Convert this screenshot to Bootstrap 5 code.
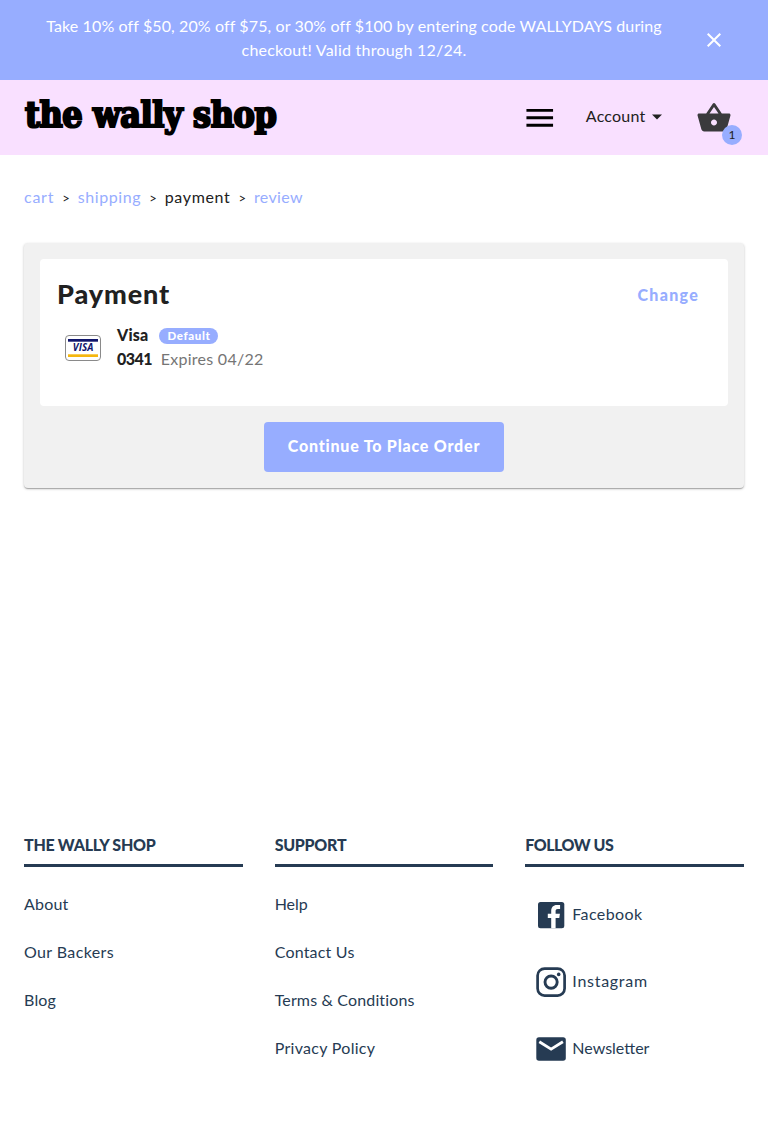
<!DOCTYPE html>
<html lang="en">
<head>
<meta charset="utf-8">
<meta name="viewport" content="width=device-width, initial-scale=1">
<title>the wally shop</title>
<link href="https://cdn.jsdelivr.net/npm/bootstrap@5.3.0/dist/css/bootstrap.min.css" rel="stylesheet">
<style>
body{font-family:Lato,"Liberation Sans",sans-serif;font-size:16px;line-height:24px;letter-spacing:.2px;color:#212121;background:#fff}
a{text-decoration:none;color:inherit}
svg{display:block;flex:none}
.heavy{font-weight:900}
.promo{background:#97adff;height:80px;padding:14px 42px 0 24px;color:#fff}
.promo-text{width:660px;letter-spacing:.115px}
.promo-text span{letter-spacing:.24px}
.promo-close{margin:14px 0 0 auto}
.topbar{background:#f9e0ff;height:75px;padding:0 24px}
.brand-name{font:bold 35.5px/48px "DejaVu Serif Condensed","DejaVu Serif",serif;font-stretch:condensed;-webkit-text-stroke:2.2px #000;color:#000;letter-spacing:-.35px;word-spacing:0;margin-top:-5px;padding-left:1px}
.menu-btn{margin-left:auto}
.account-link{margin:-3px 0 0 28px;letter-spacing:.22px}
.account-link svg{margin-left:-.5px}
.basket{margin-left:27px;margin-right:12px}
.basket-count{position:absolute;right:-10px;bottom:-9.5px;width:20px;height:20px;border-radius:50%;background:#97adff;font-size:12px;line-height:19px;text-align:center;letter-spacing:0}
.crumbs{padding:30px 24px 0;height:88px}
.crumbs a{color:#97adff}
.crumbs .sep{font-size:13px;letter-spacing:0;width:23.600px;text-align:center;padding-top:1px}
.panel{margin:0 24px;height:245px;padding:16px;background:#f1f1f1;border-radius:4px;box-shadow:0 1px 3px rgba(0,0,0,.2),0 1px 1px rgba(0,0,0,.14),0 2px 1px -1px rgba(0,0,0,.12)}
.pay-box{background:#fff;border-radius:4px;height:147px;padding:18px 29px 0 17px}
.pay-title{font-size:27px;line-height:34px;font-weight:900;letter-spacing:.9px;margin:0}
.change{color:#97adff;letter-spacing:1.28px;margin-top:6px}
.visa-card{margin:2px 16px 0 8px}
.method{margin-top:12px}
.pill-default{background:#97adff;color:#fff;border-radius:8px;height:16px;line-height:15px;font-size:11.5px;letter-spacing:.65px;padding:0 7px 0 8px;margin:5px 0 0 11px}
.expires{color:#757575;margin-left:8.5px;letter-spacing:.28px}
.place-order{width:240px;height:50px;margin-top:16px;padding:0 0 2px;border:0;border-radius:4px;background:#97adff;color:#fff;font-weight:900;letter-spacing:.79px}
footer{margin-top:344px;padding:0 24px;color:#263b53}
.foot-row{--bs-gutter-x:32px}
.foot-head{font-size:16px;line-height:24px;font-weight:900;letter-spacing:-.28px;margin:0;padding:1px 0 7px;border-bottom:3px solid #263b53}
.foot-links{padding-top:25px;gap:24px}
.social{padding:30px 0 0 8px;gap:31px}
.social a{height:36px}
.social span{padding-bottom:3px;margin-left:3px}
</style>
</head>
<body>
<div class="promo d-flex align-items-start">
  <div class="promo-text text-center">Take 10% off $50, 20% off $75, or 30% off $100 by entering code WALLYDAYS during<br><span>checkout! Valid through 12/24.</span></div>
  <svg class="promo-close" width="24" height="24" viewBox="0 0 24 24" fill="#fff"><path d="M19 6.41L17.59 5 12 10.59 6.41 5 5 6.41 10.59 12 5 17.59 6.41 19 12 13.41 17.59 19 19 17.59 13.41 12z"/></svg>
</div>
<nav class="topbar d-flex align-items-center">
  <a href="#" class="brand-name text-nowrap">the wally shop</a>
  <svg class="menu-btn" width="35.5" height="35.5" viewBox="0 0 24 24" fill="#000"><path d="M3 18h18v-2H3v2zm0-5h18v-2H3v2zm0-7v2h18V6H3z"/></svg>
  <a href="#" class="account-link d-flex align-items-center">Account
    <svg width="24" height="24" viewBox="0 0 24 24" fill="#212121"><path d="M7 10.5l5 5 5-5z"/></svg></a>
  <a href="#" class="basket position-relative">
    <svg width="36" height="36" viewBox="0 0 24 24" fill="#3a3a3c"><path d="M17.21 9l-4.38-6.56c-.19-.28-.51-.42-.83-.42-.32 0-.64.14-.83.43L6.79 9H2c-.55 0-1 .45-1 1 0 .09.01.18.04.27l2.54 9.27c.23.84 1 1.46 1.92 1.46h13c.92 0 1.69-.62 1.93-1.46l2.54-9.27L23 10c0-.55-.45-1-1-1h-4.79zM9 9l3-4.4L15 9H9zm3 8c-1.100 0-2-.9-2-2s.9-2 2-2 2 .9 2 2-.9 2-2 2z"/></svg>
    <span class="basket-count">1</span></a>
</nav>
<main>
  <div class="crumbs d-flex align-items-start">
    <a href="#" style="letter-spacing:.75px">cart</a><span class="sep">&gt;</span><a href="#" style="letter-spacing:.58px">shipping</a><span class="sep">&gt;</span><span style="letter-spacing:.65px">payment</span><span class="sep">&gt;</span><a href="#" style="letter-spacing:.34px">review</a>
  </div>
  <section class="panel">
    <div class="pay-box">
      <div class="d-flex justify-content-between align-items-start">
        <h2 class="pay-title">Payment</h2><a href="#" class="change heavy">Change</a>
      </div>
      <div class="method d-flex align-items-center">
        <svg class="visa-card" width="36" height="26" viewBox="0 0 36 26"><rect x=".5" y=".5" width="35" height="25" rx="3.500" fill="#fff" stroke="#8a8a8a"/><path fill="#10156b" d="M3 4h30v2.700H3z"/><path fill="#f5b70f" d="M3 19.300h30V22H3z"/><text x="18.200" y="16.200" text-anchor="middle" font-family="Open Sans,sans-serif" font-size="9.800" font-weight="700" font-style="italic" textLength="21" lengthAdjust="spacingAndGlyphs" fill="#10156b">VISA</text></svg>
        <div>
          <div class="d-flex align-items-start"><span class="heavy">Visa</span><span class="pill-default heavy">Default</span></div>
          <div class="d-flex"><span class="heavy" style="letter-spacing:-.5px">0341</span><span class="expires">Expires 04/22</span></div>
        </div>
      </div>
    </div>
    <button class="place-order btn d-block mx-auto">Continue To Place Order</button>
  </section>
</main>
<footer>
  <div class="row foot-row">
    <div class="col-4">
      <h3 class="foot-head">THE WALLY SHOP</h3>
      <div class="foot-links d-flex flex-column"><a href="#">About</a><a href="#" style="letter-spacing:.38px">Our Backers</a><a href="#">Blog</a></div>
    </div>
    <div class="col-4">
      <h3 class="foot-head">SUPPORT</h3>
      <div class="foot-links d-flex flex-column"><a href="#" style="letter-spacing:0">Help</a><a href="#">Contact Us</a><a href="#" style="letter-spacing:.15px">Terms &amp; Conditions</a><a href="#" style="letter-spacing:.3px">Privacy Policy</a></div>
    </div>
    <div class="col-4">
      <h3 class="foot-head" style="letter-spacing:-.5px">FOLLOW US</h3>
      <div class="social d-flex flex-column">
        <a href="#" class="d-flex align-items-center"><svg width="36" height="36" viewBox="0 0 36 36"><rect x="5" y="5" width="26.300" height="26.300" rx="2.500" fill="#263b53"/><path fill="#fff" d="M18.200 31.300V21h-3.400v-4.200h3.400v-3c0-3.600 2.200-5.900 5.600-5.900h3.300v4h-2.300c-1.600 0-2.200.8-2.200 2.200v2.700h4.300l-.6 4.200h-3.700v10.300z"/></svg><span style="letter-spacing:.4px">Facebook</span></a>
        <a href="#" class="d-flex align-items-center"><svg width="36" height="36" viewBox="0 0 36 36" fill="none" stroke="#263b53"><rect x="4.600" y="4.600" width="27" height="27" rx="7" stroke-width="2.700"/><circle cx="18.100" cy="18.100" r="6.100" stroke-width="2.900"/><circle cx="25.700" cy="10.400" r="1.800" fill="#263b53" stroke="none"/></svg><span style="letter-spacing:.72px">Instagram</span></a>
        <a href="#" class="d-flex align-items-center"><svg width="36" height="36" viewBox="0 0 36 36"><rect x="3.300" y="6.300" width="29.500" height="23.500" rx="2.700" fill="#263b53"/><path d="M6.300 10.800l11.800 7.300 11.800-7.300" fill="none" stroke="#fff" stroke-width="2.800"/></svg><span style="letter-spacing:0">Newsletter</span></a>
      </div>
    </div>
  </div>
</footer>
<script src="https://cdn.jsdelivr.net/npm/bootstrap@5.3.0/dist/js/bootstrap.bundle.min.js"></script>
</body>
</html>
